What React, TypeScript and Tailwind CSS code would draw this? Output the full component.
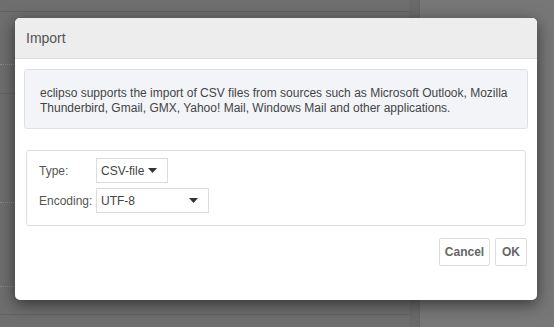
import React from "react";

const FONT = "font-['Liberation_Sans',Arial,sans-serif]";

function Caret() {
  return (
    <svg width="9" height="5" viewBox="0 0 9 5" className="shrink-0">
      <path d="M0 0h9L4.5 5z" fill="#333" />
    </svg>
  );
}

function Select({ value, width }: { value: string; width: string }) {
  return (
    <div
      className={`flex h-[25px] items-center justify-between border border-[#dcdcdc] bg-white pl-[4px] pr-[10px] text-[12px] text-[#444] ${width}`}
    >
      <span>{value}</span>
      <Caret />
    </div>
  );
}

export default function App() {
  return (
    <div className={`relative h-[327px] w-[554px] overflow-hidden bg-[#6e6e6e] ${FONT}`}>
      {/* dimmed page behind the dialog */}
      <div className="flex h-full">
        <div className="flex w-[410px] flex-col">
          <div className="h-[12px] border-b border-[#626262]" />
          <div className="h-[52px]" />
          <div className="border-b border-dotted border-[#8a8a8a]" />
          <div className="h-[28px]" />
          <div className="border-b border-[#636363]" />
          <div className="h-[108px]" />
          <div className="border-b border-dotted border-[#8a8a8a]" />
          <div className="h-[83px]" />
          <div className="border-b border-dotted border-[#8a8a8a]" />
          <div className="h-[27px]" />
          <div className="border-b border-[#626262]" />
        </div>
        <div className="w-[10px] border-x border-[#666] bg-[#6a6a6a]" />
        <div className="flex-1 bg-[#777]" />
      </div>

      {/* modal */}
      <div className="absolute left-[15px] top-[18px] flex h-[282px] w-[522px] flex-col overflow-hidden rounded-[5px] bg-white shadow-[0_4px_16px_rgba(0,0,0,0.55)]">
        <div className="flex h-[41px] items-center border-b border-[#dcdcdc] bg-[#ededed] pl-[11px] pt-[1px] text-[14px] text-[#555]">
          Import
        </div>

        <div className="flex flex-col px-[9px] pt-[10px]">
          <div className="rounded-[3px] border border-[#dfe0e3] bg-[#f3f4f8] px-[15px] pb-[12px] pt-[16px] text-[12px] leading-[15px] text-[#444]">
            eclipso supports the import of CSV files from sources such as Microsoft Outlook, Mozilla
            Thunderbird, Gmail, GMX, Yahoo! Mail, Windows Mail and other applications.
          </div>

          <div className="mx-[2px] mt-[21px] flex h-[76px] flex-col gap-[5px] rounded-[3px] border border-[#dedede] px-[12px] pt-[7px] text-[12px] text-[#555]">
            <div className="flex items-center">
              <span className="w-[57px]">Type:</span>
              <Select value="CSV-file" width="w-[72px]" />
            </div>
            <div className="flex items-center">
              <span className="w-[57px]">Encoding:</span>
              <Select value="UTF-8" width="w-[113px]" />
            </div>
          </div>

          <div className="mt-[12px] flex justify-end gap-[5px] pr-[1px]">
            <button className="h-[28px] w-[51px] rounded-[2px] border border-[#dcdcdc] bg-white text-[12px] font-bold text-[#666]">
              Cancel
            </button>
            <button className="h-[28px] w-[32px] rounded-[2px] border border-[#dcdcdc] bg-white text-[12px] font-bold text-[#666]">
              OK
            </button>
          </div>
        </div>
      </div>
    </div>
  );
}
